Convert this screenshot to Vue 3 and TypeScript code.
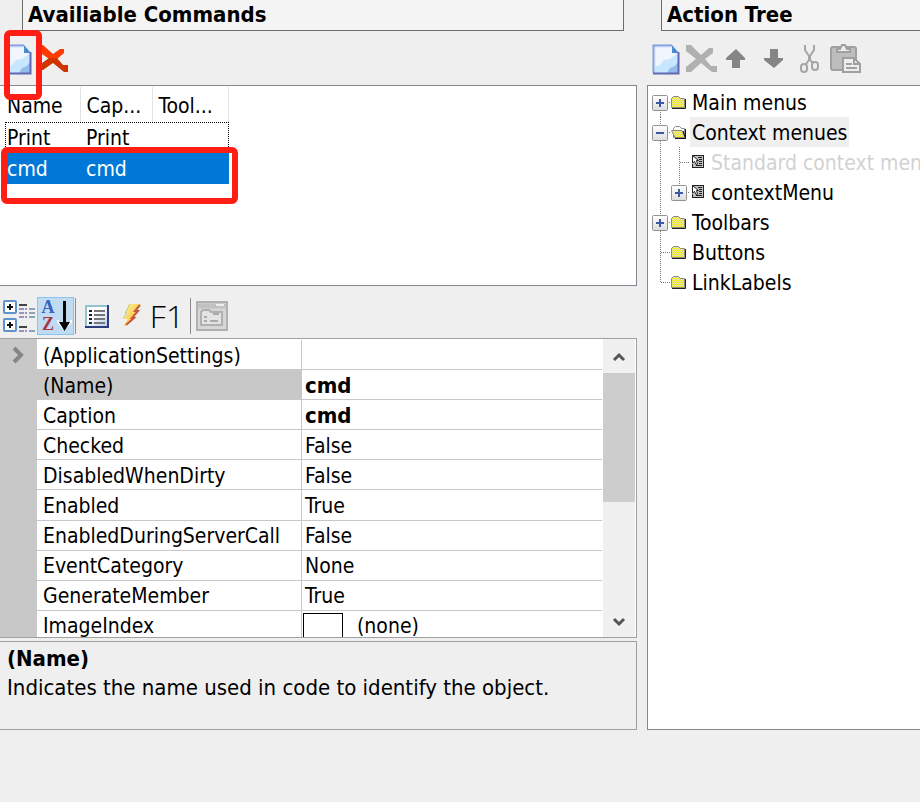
<script setup lang="ts">
import { ref } from 'vue'

interface Command { name: string; caption: string; tooltip: string }
interface Property { name: string; value: string; bold?: boolean; swatch?: boolean }
type Rail = 'tee' | 'end' | 'line' | 'plus' | 'minus'
interface TreeRow {
  label: string
  rails: Rail[]
  edges: string[]
  icon: 'folder' | 'open' | 'menu'
  disabled?: boolean
}

const commands: Command[] = [
  { name: 'Print', caption: 'Print', tooltip: '' },
  { name: 'cmd', caption: 'cmd', tooltip: '' },
]
const selectedCommand = ref('cmd')

const properties: Property[] = [
  { name: '(ApplicationSettings)', value: '' },
  { name: '(Name)', value: 'cmd', bold: true },
  { name: 'Caption', value: 'cmd', bold: true },
  { name: 'Checked', value: 'False' },
  { name: 'DisabledWhenDirty', value: 'False' },
  { name: 'Enabled', value: 'True' },
  { name: 'EnabledDuringServerCall', value: 'False' },
  { name: 'EventCategory', value: 'None' },
  { name: 'GenerateMember', value: 'True' },
  { name: 'ImageIndex', value: '(none)', swatch: true },
]
const selectedProperty = ref('(Name)')

// Each edge is the dotted path drawn in the matching rail cell.
const top = 'M8.5 0V15'
const through = 'M8.5 0V30'
const below = 'M8.5 15V30'
const across = 'M9 15.5H19'
const tree: TreeRow[] = [
  { label: 'Main menus', rails: ['plus'], edges: [below + across], icon: 'folder' },
  { label: 'Context menues', rails: ['minus'], edges: [through + across], icon: 'open' },
  { label: 'Standard context menu', rails: ['line', 'tee'], edges: [through, through + across], icon: 'menu', disabled: true },
  { label: 'contextMenu', rails: ['line', 'plus'], edges: [through, top + across], icon: 'menu' },
  { label: 'Toolbars', rails: ['plus'], edges: [through + across], icon: 'folder' },
  { label: 'Buttons', rails: ['tee'], edges: [through + across], icon: 'folder' },
  { label: 'LinkLabels', rails: ['end'], edges: [top + across], icon: 'folder' },
]
const selectedNode = ref('Context menues')
</script>

<template>
  <main class="designer">
    <svg class="defs" aria-hidden="true">
      <defs>
        <linearGradient id="toggleFill" x1="0" y1="0" x2="0" y2="1">
          <stop offset="0" stop-color="#fff" /><stop offset="1" stop-color="#dcdcdc" />
        </linearGradient>
        <linearGradient id="boltFill" x1="0" y1="0" x2="1" y2="1">
          <stop offset="0" stop-color="#fff9a0" /><stop offset="0.5" stop-color="#fbd15a" /><stop offset="1" stop-color="#e0702c" />
        </linearGradient>
        <linearGradient id="sheetFill" x1="0" y1="0" x2="1" y2="1">
          <stop offset="0.4" stop-color="#fff" /><stop offset="1" stop-color="#b4c8f4" />
        </linearGradient>
        <pattern id="weave" width="2" height="2" patternUnits="userSpaceOnUse">
          <rect width="2" height="2" fill="#d9d69a" />
          <path d="M0 0h1v1h-1zM1 1h1v1h-1z" fill="#fbf636" />
        </pattern>
        <symbol id="page" viewBox="0 0 28 31">
          <path d="M1.5 1.5H20L26.5 8V29.5H1.5Z" fill="#f1f5fc" />
          <path d="M2 23L8 21L12 16L18 15L26 9V29H2Z" fill="#c6e7ff" />
          <path d="M15 29L18 24L23 22L26 18V29Z" fill="#93bcea" />
          <path d="M1.5 29V1.5H20" fill="none" stroke="#7f9ee0" stroke-width="2" />
          <path d="M1 29.5H26.5V8" fill="none" stroke="#6268b4" stroke-width="2" />
          <path d="M20 1V9H27Z" fill="#4d8bd0" />
          <path d="M3 28V3H18" fill="none" stroke="#c9dcfa" />
        </symbol>
        <symbol id="cross" viewBox="0 0 32 30">
          <path d="M0 1H5L15 11L23 4H27V9L19 15L25 22H31V28H26L15 19L5 28H0V23L10 15L0 7Z" fill="currentColor" />
        </symbol>
      </defs>
    </svg>

    <section class="pane commands-pane">
      <h2 class="title">Availiable Commands</h2>
      <div class="toolbar">
        <button type="button" class="tool new" aria-label="New command">
          <svg width="28" height="31"><use href="#page" /></svg>
        </button>
        <button type="button" class="tool" aria-label="Delete command">
          <svg width="32" height="30" viewBox="0 0 32 30">
            <path d="M0 1H5L15 10L22 5H26V9L19 15H11L0 7Z" fill="#ff3b00" />
            <path d="M11 14H19L25 21H30V28H26L15 19L5 26H0V22Z" fill="#cf3500" />
          </svg>
        </button>
        <span class="mark mark-new"></span>
      </div>

      <div class="list-box">
        <table class="list">
          <thead>
            <tr><th class="c-name">Name</th><th class="c-caption">Cap...</th><th class="c-tip">Tool...</th></tr>
          </thead>
          <tbody>
            <tr
              v-for="c in commands" :key="c.name"
              :class="c.name === selectedCommand ? 'selected' : 'focused'"
              @click="selectedCommand = c.name"
            >
              <td>{{ c.name }}</td><td>{{ c.caption }}</td><td>{{ c.tooltip }}</td>
            </tr>
          </tbody>
        </table>
        <span class="mark mark-row"></span>
      </div>

      <div class="toolbar props-toolbar">
        <button type="button" class="tool" aria-label="Categorized">
          <svg width="32" height="32" viewBox="0 0 32 32">
            <g fill="#fff" stroke="#5e93cc" stroke-width="2">
              <rect x="1" y="1" width="12" height="12" rx="1" /><rect x="1" y="19" width="12" height="12" rx="1" />
            </g>
            <path d="M4 7H10M7 4V10M4 25H10M7 22V28" stroke="#111" stroke-width="2" />
            <path d="M16 5H24M16 27H24" stroke="#444" stroke-width="2" />
            <path d="M16 9H24M16 13H24M16 17H24M16 31H24" stroke="#9c93bd" stroke-width="2" stroke-dasharray="5 1" />
            <path d="M26 9H32M26 13H32M26 17H32M26 31H32" stroke="#8ba5b8" stroke-width="2" />
          </svg>
        </button>
        <button type="button" class="tool sort" aria-label="Alphabetical">
          <span class="letters"><span class="a">A</span><span class="z">Z</span></span>
          <svg width="15" height="32" viewBox="0 0 15 32">
            <path d="M1 20V22L7 29L14 22V20" fill="none" stroke="#fff" stroke-width="2" />
            <path d="M6 1H9V22H13L7.500 31L2 22H6Z" fill="#050505" />
          </svg>
        </button>
        <span class="separator"></span>
        <button type="button" class="tool sheet" aria-label="Properties">
          <svg width="24" height="23" viewBox="0 0 24 23">
            <rect x="1" y="1" width="22" height="21" fill="url(#sheetFill)" stroke="#90a6d3" stroke-width="2" />
            <path d="M0 22H23V0" fill="none" stroke="#2d3b7c" stroke-width="2" />
            <path d="M1 21V1H22" fill="none" stroke="#8fc3cf" stroke-width="2" />
            <path d="M4 6H7M4 10H7M4 14H7M4 18H7" stroke="#222" stroke-width="2" />
            <path d="M9 6H20M9 10H20M9 14H20M9 18H20" stroke="#777" stroke-width="2" />
          </svg>
        </button>
        <button type="button" class="tool bolt" aria-label="Events">
          <svg width="22" height="26" viewBox="0 0 22 26">
            <path d="M8 1H20L14 8H18L11 15H14L2 24L7 16H2L7 10H4Z" fill="url(#boltFill)" />
            <path d="M19 2L14 8H17L11 15H13L5 22" fill="none" stroke="#c4583e" stroke-width="2" />
            <path d="M9 1L4 10H6L2 15" fill="none" stroke="#c9c48e" />
          </svg>
        </button>
        <button type="button" class="tool help">F1</button>
        <span class="separator"></span>
        <button type="button" class="tool" aria-label="Property pages" disabled>
          <svg width="33" height="31" viewBox="0 0 33 31">
            <rect x="1" y="1" width="30" height="28" fill="#d6d6d6" stroke="#b0b0b0" stroke-width="2" />
            <path d="M2 5H30" stroke="#c2c2c2" stroke-width="5" />
            <path d="M20 4H28" stroke="#eee" stroke-width="2" />
            <path d="M5 24V11L7 9H13L15 11H26V24Z" fill="#e3e3e3" stroke="#b0b0b0" stroke-width="2" />
            <path d="M17 13H23M8 16H11M8 20H11M14 20H22" stroke="#aaa" stroke-width="2" />
          </svg>
        </button>
      </div>

      <div class="property-box">
        <div class="gutter">
          <svg width="12" height="18" viewBox="0 0 12 18"><path d="M2 2L9 9L2 16" fill="none" stroke="#858585" stroke-width="4" /></svg>
        </div>
        <table class="properties">
          <tbody>
            <tr v-for="p in properties" :key="p.name" @click="selectedProperty = p.name">
              <th :class="{ active: p.name === selectedProperty }" scope="row">{{ p.name }}</th>
              <td :class="{ bold: p.bold }"><span v-if="p.swatch" class="swatch"></span>{{ p.value }}</td>
            </tr>
          </tbody>
        </table>
        <div class="scrollbar">
          <button type="button" class="arrow" aria-label="Scroll up">
            <svg width="14" height="10" viewBox="0 0 14 10"><path d="M2 8L7 3L12 8" fill="none" stroke="#555" stroke-width="3" /></svg>
          </button>
          <div class="thumb"></div>
          <button type="button" class="arrow down" aria-label="Scroll down">
            <svg width="14" height="10" viewBox="0 0 14 10"><path d="M2 2L7 7L12 2" fill="none" stroke="#555" stroke-width="3" /></svg>
          </button>
        </div>
      </div>

      <div class="description">
        <h3>(Name)</h3>
        <p>Indicates the name used in code to identify the object.</p>
      </div>
    </section>

    <section class="pane tree-pane">
      <h2 class="title">Action Tree</h2>
      <div class="toolbar">
        <button type="button" class="tool" aria-label="New item">
          <svg width="28" height="31"><use href="#page" /></svg>
        </button>
        <button type="button" class="tool cross" aria-label="Delete item" disabled>
          <svg width="32" height="30"><use href="#cross" /></svg>
        </button>
        <button type="button" class="tool move" aria-label="Move up">
          <svg width="20" height="20" viewBox="0 0 20 20"><path d="M10 0L19 9V11H14V19H6V11H0V9Z" fill="#858585" /></svg>
        </button>
        <button type="button" class="tool move" aria-label="Move down">
          <svg width="20" height="20" viewBox="0 0 20 20"><path d="M10 19L19 11V9H14V0H6V9H0V11Z" fill="#858585" /></svg>
        </button>
        <button type="button" class="tool cut" aria-label="Cut" disabled>
          <svg width="20" height="30" viewBox="0 0 20 30" fill="none" stroke="#a5a5a5" stroke-width="2">
            <path d="M5 1V6L9 12V16L6 20M14 1V6L10 12V16L13 19" />
            <rect x="1" y="20" width="6" height="8" rx="3" /><rect x="12" y="18" width="6" height="8" rx="3" />
          </svg>
        </button>
        <button type="button" class="tool" aria-label="Paste" disabled>
          <svg width="32" height="30" viewBox="0 0 32 30" stroke="#a0a0a0" stroke-width="2">
            <rect x="1" y="3" width="25" height="23" rx="2" fill="#bdbdbd" />
            <path d="M7 8V5H10L12 1H15L17 5H20V8Z" fill="#eee" />
            <path d="M13 14H24L30 20V28H13Z" fill="#eee" />
            <path d="M24 14V20H30M16 20H22M16 24H27" fill="none" />
          </svg>
        </button>
      </div>
      <ul class="tree">
        <li v-for="row in tree" :key="row.label" class="node" @click="selectedNode = row.label">
          <svg v-for="(rail, i) in row.rails" :key="i" class="rail" width="19" height="30" viewBox="0 0 19 30">
            <path :d="row.edges[i]" fill="none" stroke="#777" stroke-dasharray="1 1" />
            <g v-if="rail === 'plus' || rail === 'minus'">
              <rect x="0.500" y="8.500" width="15" height="15" rx="1" fill="url(#toggleFill)" stroke="#929292" />
              <path :d="rail === 'plus' ? 'M4 16H12M8 12V20' : 'M4 16H12'" stroke="#3c58a6" stroke-width="2" />
            </g>
          </svg>
          <svg v-if="row.icon === 'folder'" class="icon" width="19" height="30" viewBox="0 0 19 30">
            <path d="M0.500 20.500V11.500L2.500 9.500H7.500L9.500 11.500H13.500V20.500Z" fill="url(#weave)" stroke="#8a8a80" />
            <path d="M1 21.500H14.500V12" fill="none" stroke="#222" />
          </svg>
          <svg v-else-if="row.icon === 'open'" class="icon" width="19" height="30" viewBox="0 0 19 30">
            <path d="M2.500 20.500V11.500L4.500 9.500H8.500L10.500 11.500H13.500V20.500Z" fill="#fff" stroke="#8a8a80" />
            <path d="M0.500 13.500H11L14 20.500H4Z" fill="url(#weave)" stroke="#8a8a80" />
            <path d="M4 21.500H15M14.500 12V21M12 14L14 20" fill="none" stroke="#111" />
          </svg>
          <svg v-else class="icon" width="19" height="30" viewBox="0 0 19 30">
            <rect x="2" y="8" width="12" height="13" fill="#c0c0c0" />
            <path d="M2 8.500H14M13.500 8V21M2 20.500H14M2.500 17V21" stroke="#222" />
            <path d="M8 10.500H12M9 12.500H12M9 14.500H12M9 16.500H12M6 18.500H12" stroke="#222" />
            <path d="M2.500 8.500V16L4.500 14.500L6.500 18L7.500 17L6.500 13.500H8.500Z" fill="#fff" stroke="#222" />
          </svg>
          <span class="label" :class="{ current: row.label === selectedNode, disabled: row.disabled }">{{ row.label }}</span>
        </li>
      </ul>
    </section>
  </main>
</template>

<style>
body { margin: 0; background: #efefef; }
</style>

<style scoped>
* { box-sizing: border-box; }
.designer {
  display: grid;
  grid-template-columns: minmax(0, 637fr) minmax(0, 273fr);
  column-gap: 10px;
  min-height: 100vh;
  align-items: start;
  overflow: hidden;
  background: #efefef;
  color: #000;
  font-family: 'DejaVu Sans Condensed', 'DejaVu Sans', 'Noto Sans', sans-serif;
  font-size: 21px;
  line-height: 30px;
}
.defs { position: absolute; width: 0; height: 0; }
.pane { display: flex; flex-direction: column; }
.title {
  margin: 0 13px 0 22px;
  padding: 0 5px;
  height: 31px;
  border: 1px solid #6d6d6d;
  border-top: 0;
  background: #f4f4f4;
  font-size: 22px;
  font-weight: 700;
  line-height: 29px;
}
.tree-pane .title { margin: 0 0 0 14px; border-right: 0; }
.toolbar { position: relative; display: flex; align-items: center; height: 54px; padding: 2px 5px 0; }
.tool {
  display: flex;
  align-items: center;
  justify-content: center;
  flex: none;
  padding: 0;
  border: 0;
  background: none;
  color: inherit;
  font: inherit;
}
.tool.new { margin-right: 6px; }
.commands-pane .toolbar { padding-left: 4px; }
.tool.cross { margin: 0 8px 0 6px; color: #b0b0b0; }
.tool.move { margin-right: 18px; }
.tool.cut { margin: 0 10px 0 -2px; }
.mark { position: absolute; z-index: 1; border: 6px solid #ff1e14; border-radius: 6px; pointer-events: none; }
.mark-new { left: 4px; top: -1px; width: 38px; height: 70px; }
.mark-row { left: 1px; top: 61px; width: 237px; height: 57px; }

.list-box {
  position: relative;
  height: 201px;
  padding: 1px 0 0 5px;
  border: 1px solid #828790;
  border-left: 0;
  background: #fff;
}
.list { width: 224px; border-collapse: collapse; table-layout: fixed; }
.list th, .list td { padding: 2px 0 0 2px; font-weight: 400; text-align: left; white-space: nowrap; }
.list th { height: 35px; border-right: 1px solid #e2e2e2; }
.list td { height: 31px; padding-top: 2px; line-height: 29px; }
.list th + th, .list td + td { padding-left: 6px; }
.c-name { width: 75px; }
.c-caption { width: 72px; }
.focused { outline: 1px dotted #000; outline-offset: -1px; }
.selected { background: #0078d7; color: #fff; }

.commands-pane .props-toolbar { height: 52px; padding: 8px 3px 0; }
.sort { width: 37px; height: 38px; margin-left: 2px; border: 1px solid #8cc4f0; background: #bfdcf2; }
.letters { display: flex; flex-direction: column; width: 17px; font-size: 18px; font-family: 'Liberation Serif', serif; font-weight: 700; line-height: 17px; text-align: center; }
.letters .a { color: #3563bd; }
.letters .z { color: #a93744; }
.separator { width: 1px; height: 36px; margin: 0 5px 0 1px; background: #8c8c8c; }
.sheet { margin: 0 12px 0 4px; }
.bolt { margin-right: 6px; }
.help { width: 36px; margin-right: 4px; font-family: 'Open Sans', sans-serif; font-size: 32px; font-weight: 300; }

.property-box {
  display: grid;
  grid-template-columns: 37px minmax(0, 1fr) 33px;
  height: 300px;
  overflow: hidden;
  border: 1px solid #a0a0a0;
  border-left: 0;
  background: #fff;
}
.gutter { padding: 7px 0 0 12px; background: #c8c8c8; line-height: 0; }
.properties { width: calc(100% - 1px); height: 301px; margin-top: 1px; border-collapse: separate; border-spacing: 0; table-layout: fixed; }
.properties th, .properties td {
  height: 30px;
  padding: 2px 0 0 3px;
  border-bottom: 1px solid #c8c8c8;
  font-weight: 400;
  line-height: 26px;
  text-align: left;
  white-space: nowrap;
}
.properties th { width: 265px; padding-left: 6px; border-right: 1px solid #c8c8c8; }
.properties th.active { background: #c8c8c8; }
.properties td.bold { font-size: 22px; font-weight: 700; }
.swatch { display: inline-block; width: 40px; height: 27px; margin: 0 14px 0 -2px; border: 1px solid #000; vertical-align: top; }
.scrollbar { display: flex; flex-direction: column; width: 32px; background: #f0f0f0; }
.arrow { display: flex; align-items: center; justify-content: center; height: 34px; padding: 2px 0 0; border: 0; background: none; }
.arrow.down { margin-top: auto; padding: 0 0 4px; }
.thumb { height: 129px; background: #cdcdcd; }

.description { height: 89px; margin-top: 3px; padding: 2px 7px; border: 1px solid #a0a0a0; border-left: 0; }
.description h3, .description p { margin: 0; font-size: 22px; line-height: 29px; white-space: nowrap; }

.tree {
  height: 645px;
  margin: 0;
  padding: 1px 0 0 4px;
  overflow: hidden;
  border: 1px solid #828790;
  border-right: 0;
  background: #fff;
  list-style: none;
}
.node { display: flex; height: 30px; white-space: nowrap; }
.rail, .icon { flex: none; }
.label { padding: 1px 2px 0; }
.label.current { background: #efefef; }
.label.disabled { color: #d2d2d2; }
</style>
